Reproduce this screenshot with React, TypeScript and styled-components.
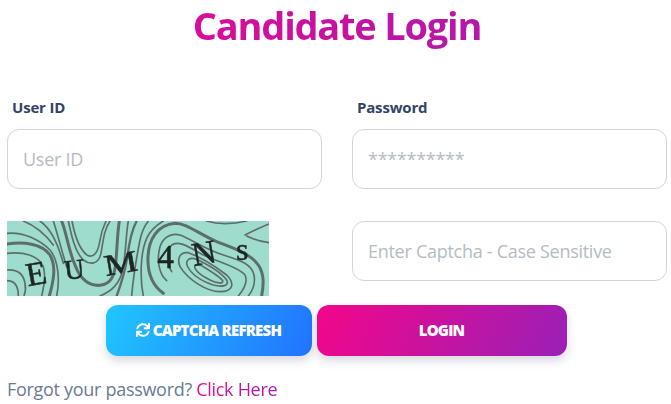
import React from "react";
import styled, { createGlobalStyle, css } from "styled-components";
import { FaSync } from "react-icons/fa";

const Global = createGlobalStyle`
  html, body { margin: 0; background: #fff; }
  body { font-family: "Open Sans", "Liberation Sans", sans-serif; }
`;

const pinkGradient = css`
  background: linear-gradient(90deg, #f0068c, #9c1fb5);
`;

const Page = styled.div`
  width: 671px;
  height: 404px;
  overflow: hidden;
  box-sizing: border-box;
  padding: 0 4px 0 7px;
`;

const Title = styled.h1`
  margin: 0 0 0 -7px;
  width: 671px;
  height: 129px;
  box-sizing: border-box;
  padding-left: 3px;
  text-align: center;
  font-size: 38px;
  line-height: 50px;
  font-weight: 700;
  letter-spacing: -1.22px;
  & > span {
    display: block;
    padding-bottom: 6px;
    ${pinkGradient}
    -webkit-background-clip: text;
    background-clip: text;
    color: transparent;
  }
`;

const Fields = styled.div`
  display: grid;
  grid-template-columns: 315px 315px;
  column-gap: 30px;
  row-gap: 32px;
  margin-top: -44px;
`;

const Field = styled.label`
  display: block;
`;

const Label = styled.span`
  display: block;
  height: 44px;
  padding: 2px 0 0 5px;
  box-sizing: border-box;
  font-size: 15px;
  line-height: 40px;
  font-weight: 700;
  letter-spacing: -0.18px;
  color: #334467;
`;

const Input = styled.input`
  display: block;
  width: 100%;
  height: 60px;
  box-sizing: border-box;
  padding: 0 15px;
  border: 1px solid #d2d6dc;
  border-radius: 12px;
  background: #fff;
  font-family: inherit;
  font-size: 18px;
  letter-spacing: -0.28px;
  color: #334467;
  outline: none;
  &::placeholder {
    color: #b4bcc6;
    opacity: 1;
  }
`;

const CaptchaBox = styled.svg`
  display: block;
  width: 262px;
  height: 75px;
`;

const Actions = styled.div`
  display: flex;
  justify-content: center;
  gap: 5px;
  margin-top: 9px;
  padding-right: 2px;
`;

const Button = styled.button<{ $wide?: boolean; $tone: "blue" | "pink" }>`
  width: ${(p) => (p.$wide ? "250px" : "206px")};
  height: 51px;
  border: 0;
  border-radius: 12px;
  padding: 0 0 2px;
  display: flex;
  align-items: center;
  justify-content: center;
  gap: 3px;
  color: #fff;
  font-family: inherit;
  font-size: 15px;
  font-weight: 800;
  letter-spacing: -0.78px;
  text-transform: uppercase;
  box-shadow: 0 5px 10px rgba(40, 50, 80, 0.18);
  background: ${(p) =>
    p.$tone === "blue"
      ? "linear-gradient(115deg, #20c6ff, #2272ff)"
      : "linear-gradient(115deg, #f3068a, #9a20b6)"};
  & svg {
    width: 14px;
    height: 14px;
  }
`;

const Forgot = styled.p`
  margin: 20px 0 0;
  font-size: 18px;
  line-height: 26px;
  letter-spacing: -0.3px;
  color: #6b7a94;
`;

const ClickHere = styled.a`
  ${pinkGradient}
  -webkit-background-clip: text;
  background-clip: text;
  color: transparent;
  font-weight: 500;
  letter-spacing: -0.3px;
`;

const Captcha = () => (
  <CaptchaBox viewBox="21 33 786 225" preserveAspectRatio="none" role="img" aria-label="captcha">
    <defs>
      <filter id="soft" x="0" y="0" width="100%" height="100%">
        <feGaussianBlur stdDeviation="1.4" />
      </filter>
    </defs>
    <rect x="21" y="33" width="786" height="225" fill="#9edccd" />
    <g filter="url(#soft)">
      <g fill="none" stroke="#566262" strokeWidth="5" strokeLinecap="round" opacity="0.9">
        <path strokeWidth="9" d="M21 102C70 95 125 100 150 135C170 170 160 215 148 258" />
        <path d="M21 70C70 65 120 90 150 120C175 150 180 210 170 258" />
        <path d="M21 130C70 125 115 135 130 170C140 205 130 235 125 258" />
        <path d="M21 180C50 178 70 190 75 220C78 235 75 250 72 258" />
        <path d="M21 212C40 212 55 225 55 258" />
        <path d="M70 33C100 45 130 65 160 105" />
        <path d="M120 33C150 55 170 90 190 160" />
        <path strokeWidth="9" d="M185 33C200 70 205 120 225 165C240 205 265 228 300 226C335 222 345 195 348 150C352 105 352 70 358 33" />
        <path d="M205 33C215 80 225 125 250 150C270 165 295 165 303 130C310 90 312 60 330 33" />
        <path d="M216 33C225 80 240 120 262 136C282 146 295 125 300 90C304 65 310 50 318 33" />
        <path d="M160 33C175 80 190 140 200 170" />
        <path strokeWidth="7" d="M350 258C362 225 375 190 382 140C388 95 395 60 410 33" />
        <path d="M300 258C330 245 362 225 370 170C378 120 378 70 385 33" />
        <path d="M395 258C400 200 412 130 420 90C425 65 432 50 445 33" />
        <path strokeWidth="9" d="M490 250C455 225 442 190 444 140C446 90 470 45 525 40C560 40 590 68 650 95C700 115 750 130 775 165C795 195 790 230 785 258" />
        <path d="M500 212C475 190 470 145 480 110C490 80 515 68 540 75C575 88 610 115 670 135C715 150 755 160 762 195C768 225 755 245 745 258" />
        <path d="M515 185C500 160 498 125 515 105C535 90 565 110 610 135C650 155 715 170 735 195C745 215 730 240 715 258" />
        <path d="M540 170C530 145 540 125 565 128C600 140 640 165 680 195C705 220 700 245 660 245C620 245 565 210 540 170Z" />
        <path d="M562 168C555 150 570 140 590 148C625 165 665 190 680 210C690 228 665 232 640 225C610 215 575 195 562 168Z" />
        <path d="M585 175C580 162 595 160 610 170C630 182 660 200 668 212C672 222 650 220 630 210C610 200 592 188 585 175Z" />
        <path d="M620 33C660 45 700 42 740 33" />
        <path d="M735 75C755 65 785 50 807 42" />
        <path d="M740 78C760 88 785 95 807 98" />
        <path d="M430 258C420 210 420 130 440 85C450 62 470 45 490 33" />
      </g>
      <g fontFamily="'Liberation Serif', serif" fill="#1d2524" stroke="#1d2524" strokeWidth="1.6">
        <text transform="translate(84 229) rotate(-10)" fontSize="100">E</text>
        <text transform="translate(196 209) rotate(-6)" fontSize="84">U</text>
        <text transform="translate(318 198) rotate(-10) scale(1.25 1)" fontSize="90">M</text>
        <text x="472" y="174" fontSize="100">4</text>
        <text transform="translate(582 168) rotate(-10)" fontSize="100">N</text>
        <text x="708" y="149" fontSize="96">s</text>
      </g>
    </g>
  </CaptchaBox>
);

export default function App() {
  return (
    <Page>
      <Global />
      <Title>
        <span>Candidate Login</span>
      </Title>
      <Fields>
        <Field>
          <Label>User ID</Label>
          <Input placeholder="User ID" />
        </Field>
        <Field>
          <Label>Password</Label>
          <Input placeholder="**********" />
        </Field>
        <Captcha />
        <Input placeholder="Enter Captcha - Case Sensitive" />
      </Fields>
      <Actions>
        <Button $tone="blue">
          <FaSync />
          Captcha Refresh
        </Button>
        <Button $tone="pink" $wide>
          Login
        </Button>
      </Actions>
      <Forgot>
        Forgot your password? <ClickHere>Click Here</ClickHere>
      </Forgot>
    </Page>
  );
}
